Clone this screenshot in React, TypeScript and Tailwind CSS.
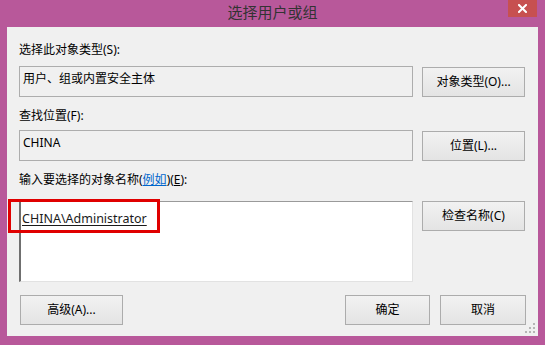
import React from "react";

const font = {
  fontFamily: '"Noto Sans", "Noto Sans CJK SC", sans-serif',
};

function WinButton({ children, className = "" }: { children: React.ReactNode; className?: string }) {
  return (
    <button
      className={
        "flex items-center justify-center border border-[#acacac] bg-linear-to-b from-[#f2f2f2] to-[#e4e4e4] text-[12px] leading-none text-black " +
        className
      }
    >
      {children}
    </button>
  );
}

function Grip() {
  const dots = [
    [8, 0],
    [4, 4],
    [8, 4],
    [0, 8],
    [4, 8],
    [8, 8],
  ];
  return (
    <svg width="11" height="11" viewBox="0 0 11 11" className="absolute right-[2px] bottom-[2px]">
      {dots.map(([x, y]) => (
        <rect key={`${x}-${y}`} x={x} y={y} width="2" height="2" fill="#b5b5b5" />
      ))}
    </svg>
  );
}

export default function App() {
  return (
    <div className="flex h-[345px] w-[545px] flex-col bg-[#b8589a]" style={font}>
      {/* title bar */}
      <div className="relative h-[27px] text-center text-[15px] leading-[25px] text-[#333]">
        选择用户或组
        <div className="absolute top-0 right-[8px] flex h-[17px] w-[29px] items-center justify-center bg-[#c75050]">
          <svg width="9" height="9" viewBox="0 0 9 9">
            <path d="M1 1 L8 8 M8 1 L1 8" stroke="white" strokeWidth="2" strokeLinecap="square" />
          </svg>
        </div>
      </div>

      {/* client area */}
      <div className="relative mx-[7px] mb-[9px] flex flex-1 flex-col bg-[#f0f0f0] pt-[15px] pr-[12px] pl-[12px] text-[12px] text-black">
        <div className="h-[16px] leading-[16px]">选择此对象类型(S):</div>
        <div className="mt-[8px] flex items-start gap-[9px]">
          <div className="h-[31px] w-[394px] border border-[#adadad] pt-[3px] pl-[3px] leading-[18px]">
            用户、组或内置安全主体
          </div>
          <WinButton className="mt-[1px] h-[30px] w-[103px]">对象类型(O)...</WinButton>
        </div>

        <div className="mt-[11px] h-[16px] leading-[16px]">查找位置(F):</div>
        <div className="mt-[6px] flex items-start gap-[9px]">
          <div className="h-[31px] w-[394px] border border-[#adadad] pt-[3px] pl-[3px] leading-[18px]">
            CHINA
          </div>
          <WinButton className="mt-[1px] h-[30px] w-[103px]">位置(L)...</WinButton>
        </div>

        <div className="mt-[11px] h-[16px] leading-[16px]">
          输入要选择的对象名称(<span className="text-[#0066cc] underline">例如</span>)(<span className="underline">E</span>):
        </div>
        <div className="mt-[13px] flex items-start gap-[9px]">
          <div className="h-[81px] w-[394px] border-t border-r border-b border-l-2 border-t-[#9a9a9a] border-r-[#e2e2e2] border-b-[#e2e2e2] border-l-[#6f6f6f] bg-white pt-[8px] pl-[1px] leading-[18px]">
            <span className="text-[12.5px] text-[#1a1a1a] underline underline-offset-2">CHINA\Administrator</span>
          </div>
          <WinButton className="h-[30px] w-[103px]">检查名称(C)</WinButton>
        </div>

        <div className="mt-[13px] flex items-start">
          <WinButton className="ml-[1px] h-[30px] w-[103px]">高级(A)...</WinButton>
          <div className="flex-1" />
          <WinButton className="h-[30px] w-[85px]">确定</WinButton>
          <WinButton className="ml-[10px] h-[30px] w-[86px]">取消</WinButton>
        </div>

        {/* red annotation box */}
        <div className="absolute top-[172px] left-[1px] h-[34px] w-[152px] border-[3px] border-[#e00000]" />
        <Grip />
      </div>
    </div>
  );
}
